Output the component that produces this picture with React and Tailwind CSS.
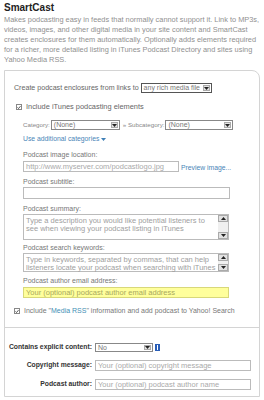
const font = { fontFamily: '"Liberation Sans", Arial, sans-serif' }

function Arrow() {
  return (
    <svg width="5" height="3" viewBox="0 0 5 3" className="block">
      <path d="M0 0h5L2.5 3z" fill="#222" />
    </svg>
  )
}

function Select({ value, className = '', dark = false }) {
  return (
    <div
      className={`flex items-stretch bg-white border ${dark ? 'border-[#555]' : 'border-[#888]'} ${className}`}
    >
      <span className="flex-1 truncate pl-[2px] text-[7px] leading-[8px] text-[#777]">{value}</span>
      <span className="m-[1px] flex w-[7px] items-center justify-center border border-[#aaa] bg-[#e2e2e2]">
        <Arrow />
      </span>
    </div>
  )
}

function Check() {
  return (
    <span className="flex h-[6px] w-[6px] items-center justify-center border border-[#888] bg-white">
      <svg width="5" height="5" viewBox="0 0 5 5" className="block">
        <path d="M0.6 2.4L1.9 3.8L4.4 0.8" stroke="#333" strokeWidth="1" fill="none" />
      </svg>
    </span>
  )
}

function Label({ children, className = '' }) {
  return (
    <div className={`h-[10px] text-[7px] leading-[10px] text-[#777] ${className}`}>{children}</div>
  )
}

function Input({ placeholder = '', className = '' }) {
  return (
    <div
      className={`border border-[#bbb] bg-white pl-[2px] text-[7.5px] leading-[9px] text-[#aaa] ${className}`}
    >
      {placeholder}
    </div>
  )
}

function TextArea({ text, className = '' }) {
  return (
    <div className={`flex border border-[#bbb] bg-white ${className}`}>
      <div className="flex-1 pl-[2px] pt-[2px] text-[7.5px] leading-[8px] text-[#a0a0a0]">{text}</div>
      <div className="flex w-[10px] flex-col justify-between bg-[#f0f0f0]">
        <span className="flex h-[7px] items-center justify-center border border-[#aaa] bg-[#e2e2e2]">
          <svg width="5" height="3" viewBox="0 0 5 3" className="block">
            <path d="M0 3h5L2.5 0z" fill="#222" />
          </svg>
        </span>
        <span className="flex h-[7px] items-center justify-center border border-[#aaa] bg-[#e2e2e2]">
          <Arrow />
        </span>
      </div>
    </div>
  )
}

export default function App() {
  return (
    <div className="h-[400px] w-[264px] overflow-hidden bg-white" style={font}>
      <div className="pl-[4px] pt-[2px] text-[10px] font-bold leading-[12px] text-[#222]">SmartCast</div>
      <p className="mt-[1px] pl-[4px] pr-[2px] text-[7.4px] leading-[10px] text-[#909090]">
        Makes podcasting easy in feeds that normally cannot support it. Link to MP3s, videos, images, and
        other digital media in your site content and SmartCast creates enclosures for them automatically.
        Optionally adds elements required for a richer, more detailed listing in iTunes Podcast Directory
        and sites using Yahoo Media RSS.
      </p>

      <div className="ml-[4px] mt-[5px] w-[256px] rounded-tr-[8px] border border-[#d4d4d4]">
        <div className="border-b border-[#d4d4d4] pb-[11px]">
          <div className="mt-[12px] flex h-[10px] items-center pl-[9px]">
            <span className="text-[7.1px] leading-[10px] text-[#666]">Create podcast enclosures from links to</span>
            <Select value="any rich media file" dark className="ml-[2px] h-[10px] w-[71px]" />
          </div>

          <div className="mt-[9px] flex h-[10px] items-center gap-[4px] pl-[11px]">
            <Check />
            <span className="text-[7.4px] leading-[10px] text-[#666]">Include iTunes podcasting elements</span>
          </div>

          <div className="mt-[8px] flex h-[10px] items-center pl-[18px]">
            <span className="text-[6.2px] text-[#888]">Category:</span>
            <Select value="(None)" className="ml-[1px] h-[10px] w-[69px]" />
            <span className="ml-[3px] text-[6.2px] text-[#888]">» Subcategory:</span>
            <Select value="(None)" className="ml-[1px] h-[10px] w-[68px]" />
          </div>

          <div className="mt-[4px] flex h-[10px] items-center gap-[2px] pl-[18px] text-[6.8px] text-[#4a86b8]">
            Use additional categories
            <svg width="5" height="3" viewBox="0 0 5 3" className="block">
              <path d="M0 0h5L2.5 3z" fill="#3f7fb6" />
            </svg>
          </div>

          <div className="pl-[18px]">
            <Label className="mt-[6px]">Podcast image location:</Label>
            <div className="mt-[1px] flex items-end">
              <Input placeholder="http://www.myserver.com/podcastlogo.jpg" className="h-[11px] w-[156px]" />
              <span className="ml-[2px] text-[6.8px] leading-[9px] text-[#4a86b8]">Preview image...</span>
            </div>

            <Label className="mt-[5px]">Podcast subtitle:</Label>
            <Input className="h-[12px] w-[207px]" />

            <Label className="mt-[5px]">Podcast summary:</Label>
            <TextArea
              className="h-[26px] w-[206px]"
              text="Type a description you would like potential listeners to see when viewing your podcast listing in iTunes"
            />

            <Label className="mt-[3px]">Podcast search keywords:</Label>
            <TextArea
              className="h-[19px] w-[206px]"
              text="Type in keywords, separated by commas, that can help listeners locate your podcast when searching with iTunes"
            />

            <Label className="mt-[4px]">Podcast author email address:</Label>
            <div className="mt-[1px] h-[11px] w-[206px] border border-[#d8d87a] bg-[#ffff9c] pl-[2px] text-[7.5px] leading-[9px] text-[#a8a860]">
              Your (optional) podcast author email address
            </div>
          </div>

          <div className="mt-[8px] flex h-[10px] items-center gap-[4px] pl-[9px]">
            <Check />
            <span className="text-[7px] leading-[10px] text-[#777]">
              Include "<span className="text-[#3f8fb5]">Media RSS</span>" information and add podcast to Yahoo! Search
            </span>
          </div>
        </div>

        <div className="pb-[6px]">
          <div className="mt-[14px] flex h-[10px] items-center">
            <span className="w-[87px] text-right text-[6.8px] font-bold text-[#333]">Contains explicit content:</span>
            <Select value="No" className="ml-[3px] h-[9px] w-[58px]" />
            <span className="ml-[2px] flex h-[7px] w-[5px] items-center justify-center bg-[#2a5fb8]">
              <span className="h-[5px] w-[1px] bg-white" />
            </span>
          </div>
          <div className="mt-[8px] flex h-[11px] items-center">
            <span className="w-[87px] text-right text-[6.8px] font-bold text-[#333]">Copyright message:</span>
            <Input placeholder="Your (optional) copyright message" className="ml-[3px] h-[11px] w-[156px]" />
          </div>
          <div className="mt-[8px] flex h-[11px] items-center">
            <span className="w-[87px] text-right text-[6.8px] font-bold text-[#333]">Podcast author:</span>
            <Input placeholder="Your (optional) podcast author name" className="ml-[3px] h-[11px] w-[156px]" />
          </div>
        </div>
      </div>
    </div>
  )
}
